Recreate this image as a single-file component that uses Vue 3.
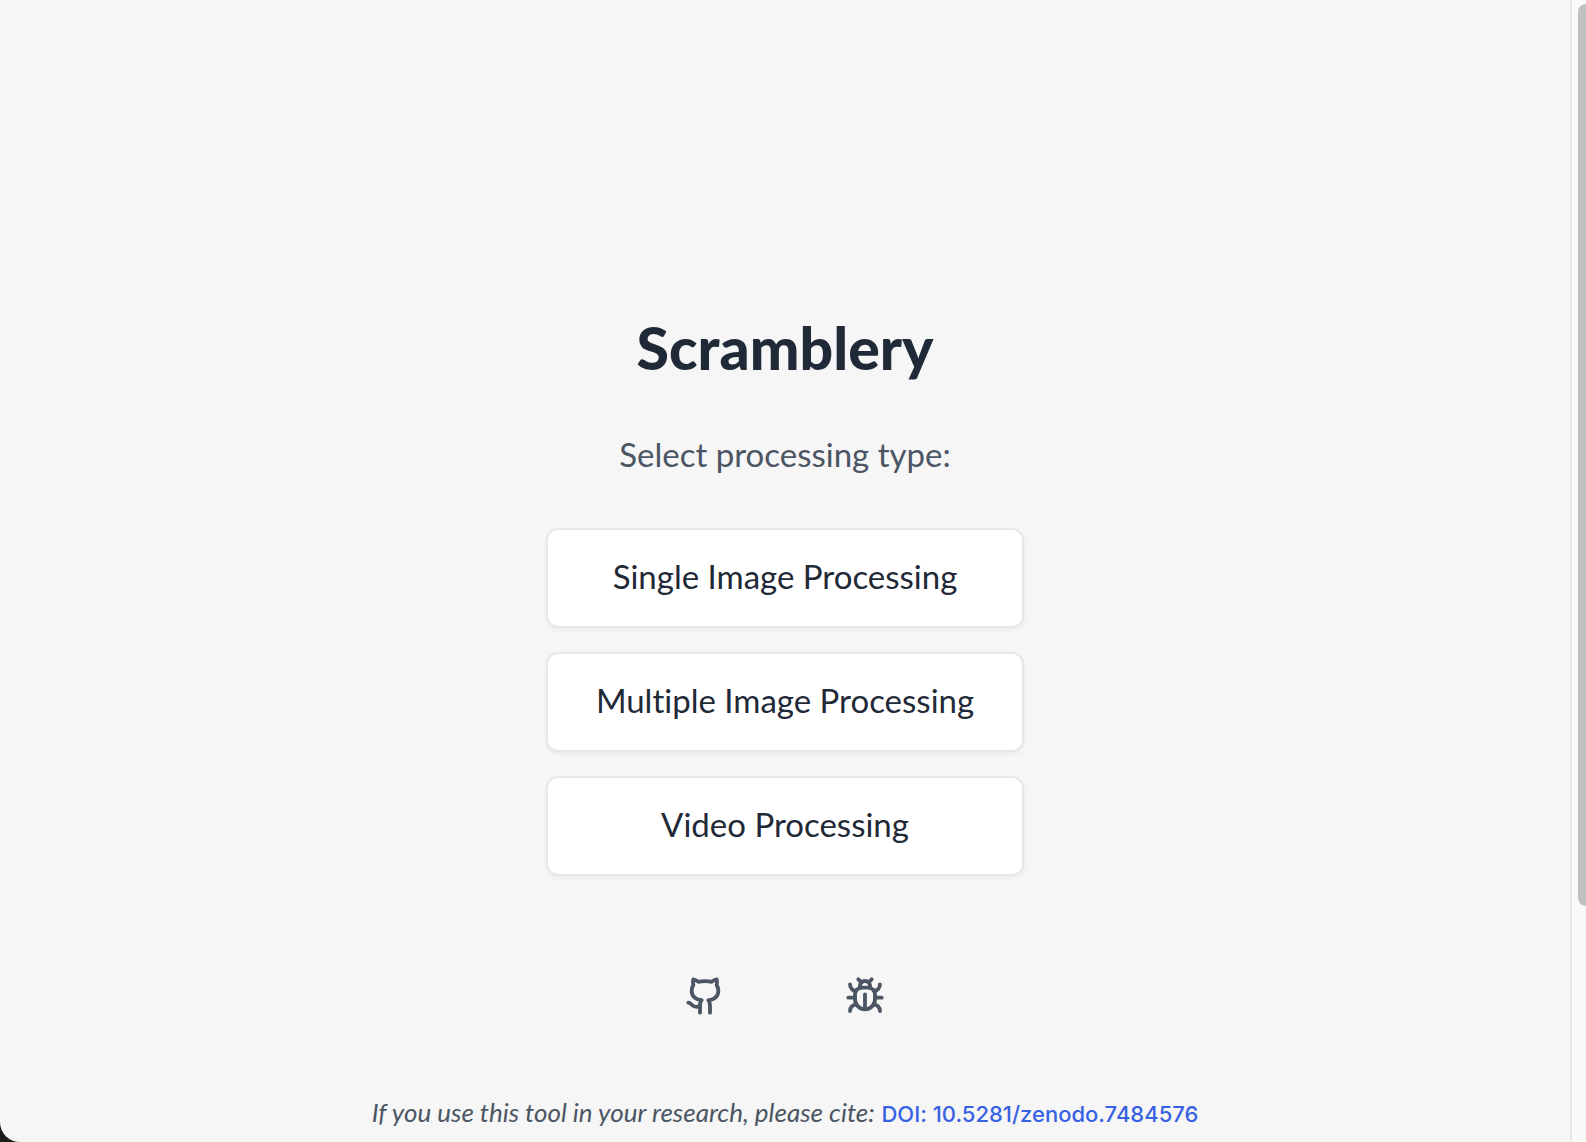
<script setup>
const modes = ['Single Image Processing', 'Multiple Image Processing', 'Video Processing']
</script>

<template>
  <div class="window">
    <main class="page">
      <h1 class="title">Scramblery</h1>
      <p class="prompt">Select processing type:</p>
      <nav class="modes">
        <button v-for="mode in modes" :key="mode" type="button" class="mode">{{ mode }}</button>
      </nav>
      <div class="links">
        <a href="#source" aria-label="Source code">
          <svg class="icon" viewBox="0 0 24 24">
            <path d="M15 22v-4a4.8 4.8 0 0 0-1-3.5c3 0 6-2 6-5.5.08-1.25-.27-2.48-1-3.5.28-1.15.28-2.35 0-3.5 0 0-1 0-3 1.5-2.64-.5-5.36-.5-8 0C6 2 5 2 5 2c-.3 1.15-.3 2.35 0 3.5A5.403 5.403 0 0 0 4 9c0 3.5 3 5.5 6 5.5-.39.49-.68 1.05-.85 1.65-.17.6-.22 1.23-.15 1.85v4" />
            <path d="M9 18c-4.51 2-5-2-7-2" />
          </svg>
        </a>
        <a href="#issues" aria-label="Report a bug">
          <svg class="icon" viewBox="0 0 24 24">
            <path d="m8 2 1.88 1.88M14.12 3.88 16 2M9 7.13v-1a3.003 3.003 0 1 1 6 0v1" />
            <path d="M12 20c-3.3 0-6-2.7-6-6v-3a4 4 0 0 1 4-4h4a4 4 0 0 1 4 4v3c0 3.3-2.7 6-6 6M12 20v-9" />
            <path d="M6.53 9C4.6 8.8 3 7.1 3 5M6 13H2M3 21c0-2.1 1.7-3.9 3.8-4M20.97 5c0 2.1-1.6 3.8-3.5 4M22 13h-4M17.2 17c2.1.1 3.8 1.9 3.8 4" />
          </svg>
        </a>
      </div>
      <p class="cite">
        <em>If you use this tool in your research, please cite:</em>{{ ' ' }}<a class="doi" href="#doi">DOI: 10.5281/zenodo.7484576</a>
      </p>
    </main>
    <div class="track" aria-hidden="true"><div class="thumb"></div></div>
  </div>
</template>

<style>
body {
  margin: 0;
  background: #1c1c1c;
}
</style>

<style scoped>
.window {
  display: flex;
  min-height: 100vh;
  background: #f6f6f6;
  border-radius: 0 0 0 20px;
  overflow: hidden;
  font-family: Avenir, Lato, sans-serif;
  font-variant-ligatures: none;
  color: #1f2937;
}
.page {
  flex: 1;
  display: flex;
  flex-direction: column;
  align-items: center;
  box-sizing: border-box;
  padding-top: 312px;
}
.title {
  margin: 0;
  font-family: Avenir, "Lato Black", Lato, sans-serif;
  font-size: 59px;
  line-height: 72px;
  font-weight: 900;
}
.prompt {
  margin: 42px 0 46px;
  font-size: 33px;
  line-height: 56px;
  color: #4b5563;
}
.modes {
  display: flex;
  flex-direction: column;
  gap: 24px;
  width: 478px;
}
.mode {
  height: 100px;
  padding: 0 24px 4px;
  border: 2px solid #e5e7eb;
  border-radius: 12px;
  background: #fff;
  box-shadow: 0 2px 4px rgba(0, 0, 0, 0.05);
  font: inherit;
  font-size: 33px;
  font-variant-ligatures: none;
  color: inherit;
}
.links {
  display: flex;
  gap: 120px;
  margin: 100px 0 78px;
}
.links a {
  display: flex;
  color: #4b5563;
}
.icon {
  width: 40px;
  height: 40px;
  fill: none;
  stroke: currentColor;
  stroke-width: 2.3;
  stroke-linecap: round;
  stroke-linejoin: round;
}
.cite {
  margin: 0;
  font-size: 26px;
  line-height: 36px;
  color: #4b5563;
}
.doi {
  font-family: Inter, sans-serif;
  font-size: 22px;
  font-weight: 500;
  color: #3662e3;
  text-decoration: none;
}
.track {
  width: 14px;
  padding: 4px 0;
  border-left: 2px solid #e7e7e7;
  background: #fafafa;
  display: flex;
  justify-content: flex-end;
}
.thumb {
  width: 8px;
  height: 79vh;
  border-radius: 8px 0 0 8px;
  background: #c1c1c1;
}
</style>
